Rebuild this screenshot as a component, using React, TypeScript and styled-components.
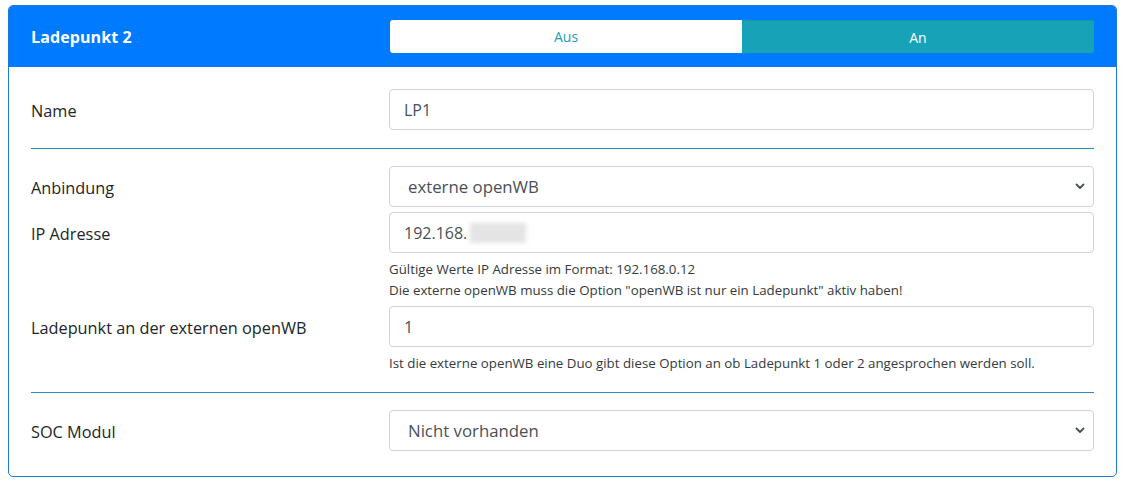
import React from "react";
import styled, { createGlobalStyle } from "styled-components";

const Global = createGlobalStyle`
  html, body { margin: 0; padding: 0; background: #fff; }
  body { font-family: "Open Sans", "Noto Sans", sans-serif; color: #212529; }
  * { box-sizing: border-box; }
`;

const Page = styled.div`
  padding: 5px 14px 0 8px;
`;

const Card = styled.section`
  width: 1109px;
  border: 1px solid #1b7bd4;
  border-radius: 5px;
  overflow: hidden;
  background: #fff;
`;

const Header = styled.header`
  display: grid;
  grid-template-columns: 358px 1fr;
  align-items: center;
  height: 61px;
  padding: 0 22px;
  background: #007bff;
`;

const Title = styled.h2`
  margin: 0;
  font-size: 16px;
  font-weight: 700;
  color: #fff;
  letter-spacing: 0.1px;
`;

const Toggle = styled.div`
  display: grid;
  grid-template-columns: 1fr 1fr;
  height: 33px;
  border-radius: 3px;
  overflow: hidden;
  margin-left: 1px;
`;

const ToggleBtn = styled.button<{ $active?: boolean }>`
  border: 0;
  margin: 0;
  font-family: "Open Sans", sans-serif;
  font-size: 14px;
  background: ${(p) => (p.$active ? "#17a2b8" : "#fff")};
  color: ${(p) => (p.$active ? "#fff" : "#17a2b8")};
  border-top: ${(p) => (p.$active ? "1px solid #1596aa" : "0")};
  padding: 0;
`;

const Body = styled.div`
  padding: 22px 22px 25px 22px;
`;

const Row = styled.div<{ $mt?: number }>`
  display: grid;
  grid-template-columns: 358px 1fr;
  margin-top: ${(p) => p.$mt ?? 0}px;
`;

const Label = styled.label`
  font-size: 16.3px;
  line-height: 38px;
  height: 41px;
  padding-top: 3px;
  color: #212529;
`;

const Field = styled.div`
  display: flex;
  flex-direction: column;
`;

const Input = styled.div`
  height: 41px;
  border: 1px solid #ced4da;
  border-radius: 4px;
  padding: 0 14px;
  display: flex;
  align-items: center;
  font-size: 16px;
  color: #495057;
`;

const Select = styled(Input)`
  padding: 0 8px 0 18px;
  font-size: 16.8px;
  justify-content: space-between;
`;

const Blur = styled.span`
  display: inline-block;
  width: 56px;
  height: 20px;
  background: #e4e4e4;
  filter: blur(2px);
  margin-left: 3px;
`;

const Help = styled.div`
  margin-top: 6px;
  font-size: 13.3px;
  line-height: 21px;
  color: #343a40;
`;

const Divider = styled.hr`
  border: 0;
  border-top: 1px solid #2a8bbf;
  margin: 18px 0 17px;
`;

const Chevron = () => (
  <svg width="10" height="7" viewBox="0 0 10 7">
    <path d="M1.5 1.5 L5 5 L8.5 1.5" fill="none" stroke="#495057" strokeWidth="1.8" strokeLinecap="round" strokeLinejoin="round" />
  </svg>
);

export default function App() {
  return (
    <>
      <Global />
      <Page>
        <Card>
          <Header>
            <Title>Ladepunkt 2</Title>
            <Toggle>
              <ToggleBtn>Aus</ToggleBtn>
              <ToggleBtn $active>An</ToggleBtn>
            </Toggle>
          </Header>
          <Body>
            <Row>
              <Label>Name</Label>
              <Input>LP1</Input>
            </Row>
            <Divider />
            <Row>
              <Label>Anbindung</Label>
              <Select>
                <span>externe openWB</span>
                <Chevron />
              </Select>
            </Row>
            <Row $mt={5}>
              <Label>IP Adresse</Label>
              <Field>
                <Input>
                  192.168.<Blur />
                </Input>
                <Help>
                  Gültige Werte IP Adresse im Format: 192.168.0.12
                  <br />
                  Die externe openWB muss die Option "openWB ist nur ein Ladepunkt" aktiv haben!
                </Help>
              </Field>
            </Row>
            <Row $mt={5}>
              <Label>Ladepunkt an der externen openWB</Label>
              <Field>
                <Input>1</Input>
                <Help>Ist die externe openWB eine Duo gibt diese Option an ob Ladepunkt 1 oder 2 angesprochen werden soll.</Help>
              </Field>
            </Row>
            <Divider />
            <Row>
              <Label>SOC Modul</Label>
              <Select>
                <span>Nicht vorhanden</span>
                <Chevron />
              </Select>
            </Row>
          </Body>
        </Card>
      </Page>
    </>
  );
}
